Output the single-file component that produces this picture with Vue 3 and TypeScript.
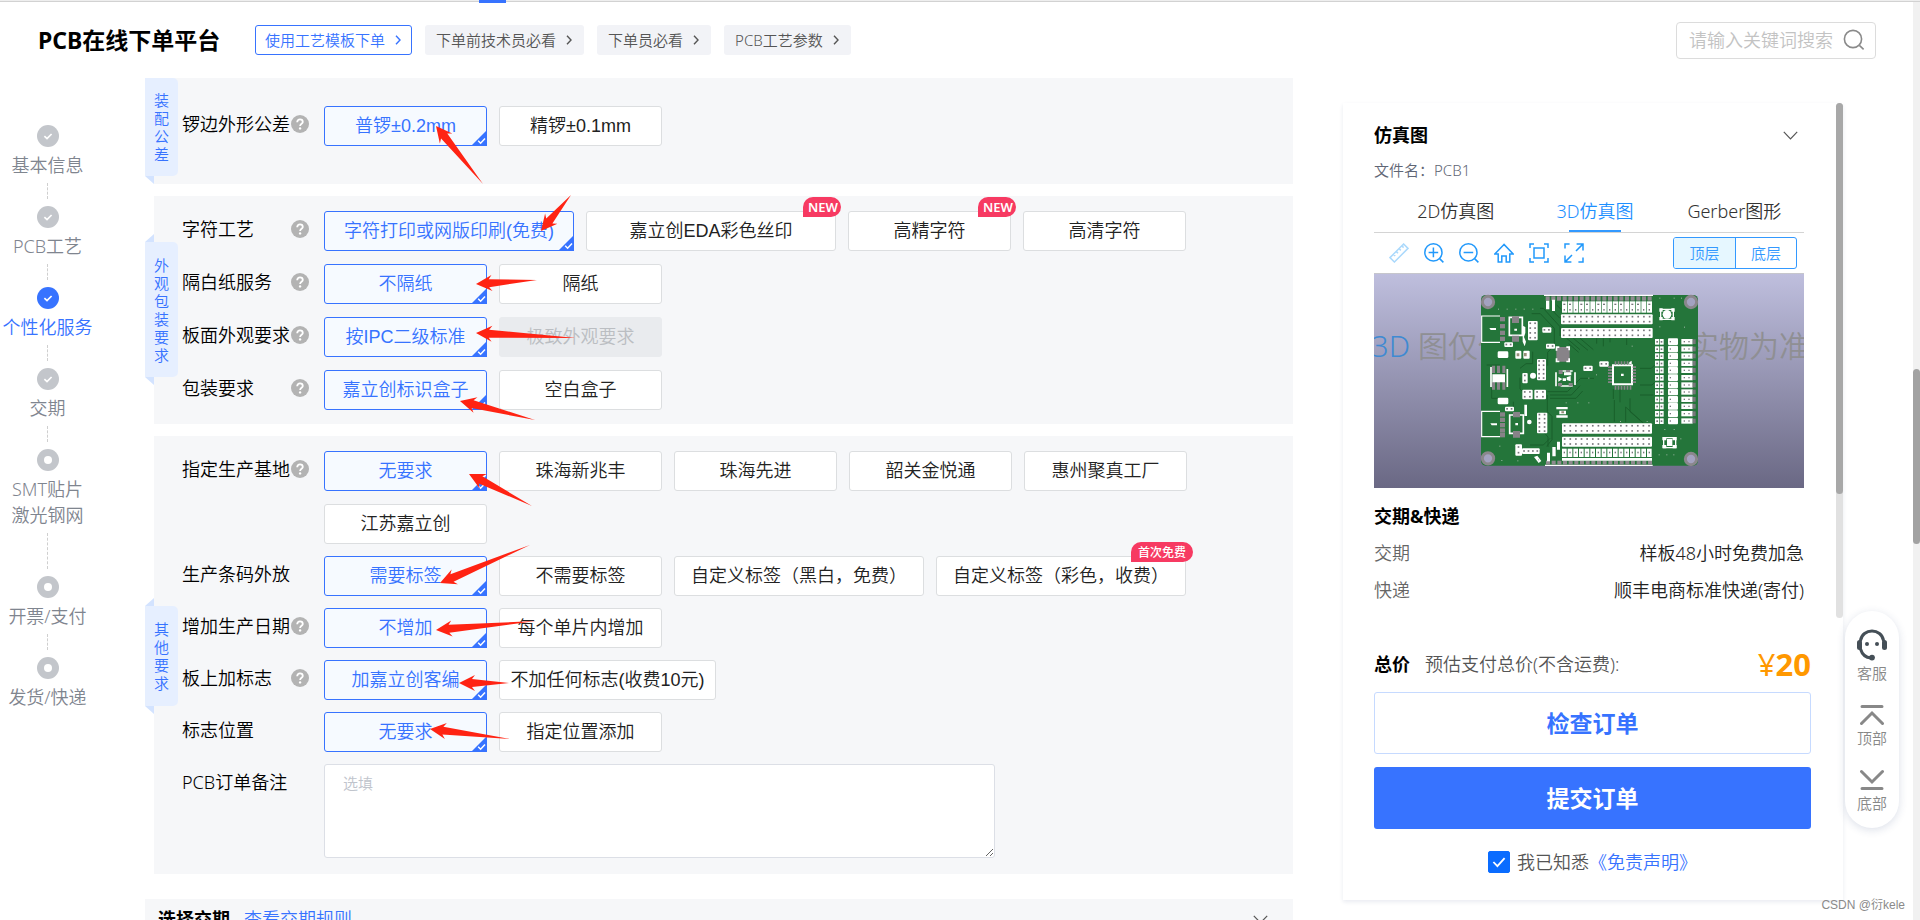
<script setup lang="ts">
import { reactive, ref } from 'vue'

type Size = 'normal' | 'medium' | 'wide'
interface Option { text: string; size?: Size; badge?: string; disabled?: boolean }
interface Row { key: string; label: string; help: boolean; options: Option[] }
interface Section { key: string; tab: string; note?: boolean; rows: Row[] }

const headerLinks = [
  { text: '使用工艺模板下单', primary: true },
  { text: '下单前技术员必看', primary: false },
  { text: '下单员必看', primary: false },
  { text: 'PCB工艺参数', primary: false },
]

const steps = [
  { lines: ['基本信息'], state: 'done' },
  { lines: ['PCB工艺'], state: 'done' },
  { lines: ['个性化服务'], state: 'current' },
  { lines: ['交期'], state: 'done' },
  { lines: ['SMT贴片', '激光钢网'], state: 'todo' },
  { lines: ['开票/支付'], state: 'todo' },
  { lines: ['发货/快递'], state: 'todo' },
]

const sections: Section[] = [
  {
    key: 'assembly', tab: '装配公差', rows: [
      { key: 'edge', label: '锣边外形公差', help: true, options: [{ text: '普锣±0.2mm' }, { text: '精锣±0.1mm' }] },
    ],
  },
  {
    key: 'looks', tab: '外观包装要求', rows: [
      {
        key: 'silk', label: '字符工艺', help: true, options: [
          { text: '字符打印或网版印刷(免费)', size: 'wide' },
          { text: '嘉立创EDA彩色丝印', size: 'wide', badge: 'NEW' },
          { text: '高精字符', badge: 'NEW' },
          { text: '高清字符' },
        ],
      },
      { key: 'paper', label: '隔白纸服务', help: true, options: [{ text: '不隔纸' }, { text: '隔纸' }] },
      { key: 'surface', label: '板面外观要求', help: true, options: [{ text: '按IPC二级标准' }, { text: '极致外观要求', disabled: true }] },
      { key: 'box', label: '包装要求', help: true, options: [{ text: '嘉立创标识盒子' }, { text: '空白盒子' }] },
    ],
  },
  {
    key: 'other', tab: '其他要求', note: true, rows: [
      {
        key: 'base', label: '指定生产基地', help: true, options: [
          { text: '无要求' }, { text: '珠海新兆丰' }, { text: '珠海先进' }, { text: '韶关金悦通' }, { text: '惠州聚真工厂' }, { text: '江苏嘉立创' },
        ],
      },
      {
        key: 'barcode', label: '生产条码外放', help: false, options: [
          { text: '需要标签' }, { text: '不需要标签' },
          { text: '自定义标签（黑白，免费）', size: 'wide' },
          { text: '自定义标签（彩色，收费）', size: 'wide', badge: '首次免费' },
        ],
      },
      { key: 'date', label: '增加生产日期', help: true, options: [{ text: '不增加' }, { text: '每个单片内增加' }] },
      { key: 'mark', label: '板上加标志', help: true, options: [{ text: '加嘉立创客编' }, { text: '不加任何标志(收费10元)', size: 'medium' }] },
      { key: 'place', label: '标志位置', help: false, options: [{ text: '无要求' }, { text: '指定位置添加' }] },
    ],
  },
]

const chosen = reactive<Record<string, string>>({})
for (const s of sections) for (const r of s.rows) chosen[r.key] = r.options[0].text

const note = ref('')
const keyword = ref('')
const agreed = ref(true)
const viewTabs = ['2D仿真图', '3D仿真图', 'Gerber图形']
const activeTab = ref('3D仿真图')
const layer = ref('顶层')

/* Hand-drawn pointers: tip and tail on the form canvas */
const pointers = [
  [436, 126, 483, 184], [541, 231, 571, 195], [476, 284, 537, 280], [476, 333, 576, 338],
  [460, 401, 535, 420], [469, 474, 532, 506], [440, 583, 530, 545], [436, 630, 536, 621],
  [459, 683, 509, 683], [430, 729, 510, 739],
].map(([x, y, tx, ty]) => {
  const length = Math.hypot(tx - x, ty - y)
  const angle = (Math.atan2(ty - y, tx - x) * 180) / Math.PI
  return {
    transform: `translate(${x - 145} ${y - 78}) rotate(${angle})`,
    points: `0,0 16,-8 13,-4 ${length},0 13,4 16,8`,
  }
})

/* Board artwork */
interface Grid { x: number; y: number; w: number; h: number; cols: number; rows: number }
const grids: Grid[] = [
  { x: 303, y: 88, w: 275, h: 30, cols: 16, rows: 2 },
  { x: 303, y: 129, w: 275, h: 30, cols: 16, rows: 2 },
  { x: 306, y: 415, w: 270, h: 31, cols: 16, rows: 2 },
  { x: 306, y: 455, w: 270, h: 30, cols: 16, rows: 2 },
  { x: 204, y: 108, w: 29, h: 58, cols: 2, rows: 4 },
  { x: 231, y: 222, w: 27, h: 64, cols: 2, rows: 5 },
  { x: 187, y: 314, w: 31, h: 29, cols: 2, rows: 2 },
  { x: 223, y: 314, w: 35, h: 29, cols: 2, rows: 2 },
  { x: 231, y: 383, w: 31, h: 62, cols: 2, rows: 5 },
  { x: 187, y: 264, w: 16, h: 31, cols: 1, rows: 2 },
  { x: 166, y: 478, w: 20, h: 34, cols: 1, rows: 2 },
  { x: 186, y: 490, w: 53, h: 17, cols: 4, rows: 1 },
  { x: 247, y: 127, w: 27, h: 16, cols: 2, rows: 1 },
  { x: 258, y: 176, w: 27, h: 15, cols: 2, rows: 1 },
  { x: 370, y: 242, w: 28, h: 16, cols: 2, rows: 1 },
  { x: 418, y: 229, w: 28, h: 16, cols: 2, rows: 1 },
  { x: 133, y: 172, w: 26, h: 14, cols: 2, rows: 1 },
  { x: 135, y: 365, w: 27, h: 14, cols: 2, rows: 1 },
]
const gridDots = grids.flatMap(g =>
  Array.from({ length: g.cols * g.rows }, (_, i) => ({
    x: g.x + ((i % g.cols) + 0.5) * (g.w / g.cols) - 3,
    y: g.y + (Math.floor(i / g.cols) + 0.5) * (g.h / g.rows) - 3,
  })),
)
const columns = Array.from({ length: 16 }, (_, i) => 306 + i * 17)
const edgePads = Array.from({ length: 19 }, (_, i) => 257 + i * 17)
const sideRows = Array.from({ length: 12 }, (_, i) => 162 + Math.round(i * 21.6))
const holes = [[84, 51], [693, 51], [84, 520], [693, 522]]
const vias = [
  [114, 71], [140, 71], [166, 71], [191, 71], [217, 71], [598, 38], [641, 38], [663, 38], [598, 124], [672, 125],
  [352, 352], [317, 352], [385, 352], [124, 525], [172, 526], [234, 523], [613, 432], [641, 432], [661, 460],
  [640, 508], [619, 508], [596, 508], [515, 182], [385, 278], [408, 268], [480, 408], [560, 408], [118, 482],
]
const traces = [
  'M215 86h26l42 44v52l-20 20v40', 'M240 70h10l50 55v28', 'M180 278v34l14 14', 'M180 250l18-14h20v-36', 'M262 320h60l40-40h40',
  'M270 330h64l26-28', 'M270 340h78l20-22', 'M262 330v50l14 14v70l-16 20', 'M250 440l14 16v30', 'M320 160l40 34M340 160l44 36M360 160l40 34M326 176l30 26',
  'M463 345v65M497 412v-46l50 46', 'M510 340v40l40 34', 'M195 345v-20M160 350v16', 'M540 330h40M540 300h36l8-8M540 250h34l10-10', 'M410 160v16M430 160v24M450 160v12M500 160v20',
  'M280 80l20 20M290 60l14 14', 'M460 312v30M480 312v40', 'M120 240h-40M95 310v30h20', 'M210 480h40l20-20',
]
</script>

<template>
  <div class="page">
    <div class="topline"><span class="topline-mark"></span></div>

    <header class="header">
      <h1>PCB在线下单平台</h1>
      <nav class="links">
        <a v-for="l in headerLinks" :key="l.text" href="#" :class="['link-btn', { primary: l.primary }]">
          {{ l.text }}
          <svg width="6" height="10" viewBox="0 0 6 10" fill="none" stroke="currentColor" stroke-width="1.4"><path d="M1 .8 5 5 1 9.2" /></svg>
        </a>
      </nav>
      <form class="search" @submit.prevent>
        <input v-model="keyword" type="text" placeholder="请输入关键词搜索" aria-label="请输入关键词搜索" />
        <button type="submit" aria-label="搜索">
          <svg width="22" height="22" viewBox="0 0 22 22" fill="none" stroke="#8a8a8a" stroke-width="1.6"><circle cx="10" cy="10" r="8.6" /><path d="m16.4 16.4 4.2 4" /></svg>
        </button>
      </form>
    </header>

    <div class="body">
      <nav class="steps">
        <a v-for="(s, i) in steps" :key="i" href="#" :class="['step', s.state]">
          <svg class="step-icon" width="22" height="22" viewBox="0 0 22 22">
            <circle cx="11" cy="11" r="11" fill="currentColor" />
            <circle v-if="s.state === 'todo'" cx="11" cy="11" r="4" fill="#fff" />
            <path v-else d="m7.4 11.2 2.6 2.4 4.6-4.6" fill="none" stroke="#fff" stroke-width="1.7" />
          </svg>
          <span v-for="t in s.lines" :key="t" class="step-text">{{ t }}</span>
          <i v-if="i < steps.length - 1" :class="['dash', { long: s.lines.length > 1 }]"></i>
        </a>
      </nav>

      <main class="form">
        <section v-for="s in sections" :key="s.key" :class="['card', s.key]">
          <div class="tab"><span>{{ s.tab }}</span></div>
          <div v-for="r in s.rows" :key="r.key" class="row" role="radiogroup" :aria-label="r.label">
            <div class="label">
              <span>{{ r.label }}</span>
              <svg v-if="r.help" width="18" height="18" viewBox="0 0 18 18">
                <circle cx="9" cy="9" r="9" fill="#b3b3b3" />
                <path d="M6.2 7.2C6.2 5.4 7.4 4.4 9 4.4s2.8 1 2.8 2.5c0 1.9-2.7 2-2.7 4.1" fill="none" stroke="#fff" stroke-width="1.8" />
                <circle cx="9.1" cy="13.4" r="1.2" fill="#fff" />
              </svg>
            </div>
            <div class="options">
              <label
                v-for="o in r.options" :key="o.text"
                :class="['option', o.size ?? 'normal', { on: chosen[r.key] === o.text, off: o.disabled }]"
              >
                <input v-model="chosen[r.key]" type="radio" :name="r.key" :value="o.text" :disabled="o.disabled" />
                <span>{{ o.text }}</span>
                <svg v-if="chosen[r.key] === o.text" class="corner" width="16" height="16" viewBox="0 0 16 16">
                  <path d="M16 0v16H0z" fill="#3773ff" />
                  <path d="m7.2 10.8 2.4 2.4 4.4-4.8" fill="none" stroke="#fff" stroke-width="1.5" />
                </svg>
                <em v-if="o.badge" :class="['badge', { latin: o.badge === 'NEW' }]">{{ o.badge }}</em>
              </label>
            </div>
          </div>
          <div v-if="s.note" class="row">
            <label class="label" for="note">PCB订单备注</label>
            <textarea id="note" v-model="note" placeholder="选填"></textarea>
          </div>
        </section>

        <section class="delivery">
          <h2>选择交期</h2>
          <a href="#">查看交期规则</a>
          <svg width="15" height="9" viewBox="0 0 15 9" fill="none" stroke="#555" stroke-width="1.2"><path d="m.8.8 6.7 7 6.7-7" /></svg>
        </section>

        <svg class="pointers" width="500" height="700" viewBox="0 0 500 700" aria-hidden="true">
          <polygon v-for="(p, i) in pointers" :key="i" :points="p.points" :transform="p.transform" fill="#ff2313" />
        </svg>
      </main>

      <aside class="panel">
        <div class="panel-top">
          <div class="panel-scroll">
            <div class="panel-head">
              <h2>仿真图</h2>
              <button type="button" aria-label="收起">
                <svg width="15" height="9" viewBox="0 0 15 9" fill="none" stroke="#555" stroke-width="1.2"><path d="m.8.8 6.7 7 6.7-7" /></svg>
              </button>
            </div>
            <p class="file">文件名：PCB1</p>
            <div class="view-tabs" role="tablist">
              <button v-for="t in viewTabs" :key="t" type="button" role="tab" :aria-selected="activeTab === t" @click="activeTab = t">{{ t }}</button>
            </div>
            <div class="tools">
              <button type="button" aria-label="测量" class="dim"><svg width="20" height="20" viewBox="0 0 20 20"><path d="M1 14.6 14.6 1 19 5.4 5.4 19z M4.6 11.4l1.6 1.6M7.4 8.6l1.6 1.6M10.2 5.8l1.6 1.6M13 3l1.6 1.6" /></svg></button>
              <button type="button" aria-label="放大"><svg width="20" height="20" viewBox="0 0 20 20"><circle cx="9.4" cy="9.4" r="8.6" /><path d="M9.4 4.6v9.6M4.6 9.4h9.6M15.6 15.6l3.8 3.8" /></svg></button>
              <button type="button" aria-label="缩小"><svg width="20" height="20" viewBox="0 0 20 20"><circle cx="9.4" cy="9.4" r="8.6" /><path d="M4.6 9.4h9.6M15.6 15.6l3.8 3.8" /></svg></button>
              <button type="button" aria-label="复位"><svg width="20" height="20" viewBox="0 0 20 20"><path d="M10 1.4.8 11h3.4v8h3.6v-6h4.4v6h3.6v-8h3.4z" /></svg></button>
              <button type="button" aria-label="适应"><svg width="20" height="20" viewBox="0 0 20 20"><path d="M1 5V1h4M15 1h4v4M19 15v4h-4M5 19H1v-4M5 5h10v10H5z" /></svg></button>
              <button type="button" aria-label="全屏"><svg width="20" height="20" viewBox="0 0 20 20"><path d="M1 5.6V1h4.6M14.4 19H19v-4.6M12 8l6.6-6.6M12.6 1H19v6.4M8 12l-6.6 6.6M1 12.6V19h6.4" /></svg></button>
              <div class="layers">
                <button v-for="l in ['顶层', '底层']" :key="l" type="button" :aria-pressed="layer === l" @click="layer = l">{{ l }}</button>
              </div>
            </div>
            <svg class="scene" viewBox="0 0 430 215">
              <defs>
                <linearGradient id="sky" x1="0" y1="0" x2="0" y2="1"><stop offset="0" stop-color="#bfbfde" /><stop offset="1" stop-color="#6a6884" /></linearGradient>
              </defs>
              <rect width="430" height="215" fill="url(#sky)" />
              <path d="M0 .5h430" stroke="#c6c6cc" />
              <g font-size="30" fill="#8f8f93">
                <text x="36" y="84" text-anchor="end" fill="#3f8ad2">3D</text>
                <text x="44" y="84">图仅供</text>
                <text x="315" y="84">实物为准</text>
              </g>
              <svg x="86" y="12" width="250" height="190" viewBox="0 0 750 570">
                <rect x="63" y="30" width="651" height="512" rx="14" fill="#24753a" />
                <g fill="none" stroke="#195f2b" stroke-width="3"><path v-for="t in traces" :key="t" :d="t" /></g>
                <path d="M252 31h327M255 541h323" stroke="#fff" stroke-width="4" />
                <g v-for="(h, i) in holes" :key="'h' + i"><circle :cx="h[0]" :cy="h[1]" r="17" fill="#a3a2c0" stroke="#8a878c" stroke-width="9" /></g>
                <g fill="#8f8a8f">
                  <rect v-for="x in edgePads" :key="'t' + x" :x="x" y="34" width="12" height="13" />
                  <rect v-for="x in edgePads" :key="'b' + x" :x="x + 1" y="527" width="12" height="12" />
                </g>
                <g fill="#fff">
                  <rect v-for="x in columns" :key="'c' + x" :x="x" y="49" width="15" height="34" />
                  <rect v-for="x in columns" :key="'d' + x" :x="x" y="491" width="14" height="25" />
                  <path d="M306 519h270v8H306zM258 47h10v26h-10zM276 44h9v34h-9zM261 503h9v26h-9zM277 486h10v28h-10zM291 470h9v24h-9zM222 516l10-4 12 16-8 6zM193 359h8v34h-8zM188 122l8 4v18l-4 12 6 14-4 14-6-14z" />
                  <rect v-for="(g, i) in grids" :key="'g' + i" :x="g.x" :y="g.y" :width="g.w" :height="g.h" rx="3" />
                  <g v-for="y in sideRows" :key="'s' + y">
                    <rect x="585" :y="y" width="12" height="17" /><rect x="599" :y="y" width="12" height="17" />
                    <rect x="624" :y="y - 2" width="30" height="20" rx="3" /><rect x="664" :y="y" width="34" height="16" />
                  </g>
                </g>
                <g fill="#77777b">
                  <rect v-for="(d, i) in gridDots" :key="'p' + i" :x="d.x" :y="d.y" width="5" height="5" />
                  <template v-for="y in sideRows" :key="'q' + y">
                    <rect x="589" :y="y + 6" width="5" height="5" /><rect x="602" :y="y + 6" width="5" height="5" />
                    <rect x="629" :y="y + 6" width="4" height="4" /><rect x="671" :y="y + 6" width="4" height="4" /><rect x="685" :y="y + 6" width="4" height="4" />
                    <rect x="698" :y="y + 1" width="9" height="14" />
                  </template>
                  <template v-for="x in columns" :key="'r' + x"><rect :x="x + 5" y="72" width="4" height="5" /><rect :x="x + 5" y="500" width="4" height="5" /></template>
                  <template v-for="x in columns.filter((_, i) => i % 3 !== 2)" :key="'u' + x"><rect :x="x + 4" y="56" width="6" height="4" /></template>
                </g>
                <g fill="#9fb8a4"><rect v-for="(v, i) in vias" :key="'v' + i" :x="v[0]" :y="v[1]" width="3" height="3" /></g>
                <!-- connectors -->
                <g fill="none" stroke="#fff" stroke-width="3.5">
                  <path d="M120 93H65v79h55M120 379H65v76h55" />
                  <path d="M148 97h39v54h-39zM149 390h41v55h-41z" stroke-width="5" />
                  <path d="M93 246v60M142 252v54M288 262v42M345 262v38M302 258h36M302 303h36" stroke-width="5" />
                  <path d="M459 241h57v57h-57z" stroke-width="6" />
                  <path d="M602 73h38v30h-38zM611 458h36v30h-36z" stroke-width="4" />
                </g>
                <g fill="#878388">
                  <path d="M156 94h21v20h-21zM156 152h21v18h-21zM159 381h21v16h-21zM159 438h21v20h-21z" />
                  <path v-for="y in [96, 117, 137, 155, 382, 398, 414, 430, 444]" :key="y" :d="`M120 ${y}h15v13h-15z`" />
                  <path d="M96 242h9v22h-9zM111 242h9v22h-9zM127 242h9v22h-9zM96 290h9v24h-9zM111 290h9v24h-9zM127 290h9v24h-9z" />
                  <path v-for="k in [0, 1, 2, 3, 4, 5]" :key="'ic' + k" :d="`M${464 + k * 9} 229h5v10h-5zM${464 + k * 9} 302h5v12h-5zM444 ${244 + k * 9}h12v5h-12zM518 ${244 + k * 9}h10v5h-10z`" />
                  <path d="M289 186h40v44h-40zM296 255h12v12h-12zM318 255h12v12h-12zM294 294h12v10h-12zM326 294h12v10h-12z" />
                </g>
                <g fill="#fff">
                  <path d="M97 268h38v24H97zM312 262h22v9h-22zM295 276l12 6-12 8zM320 277l12-4v16l-12-4zM289 366h34v7h-34zM289 391h34v7h-34zM298 377h20v11h-20zM308 280h10v8h-10z" />
                  <path d="M88 129h20v6H92zM91 415h20v6H95zM163 131h8v6h-8zM166 414h8v7h-8zM483 266h8v7h-8zM505 235l10-8v12z" />
                  <rect x="113" y="199" width="32" height="20" rx="4" /><rect x="113" y="338" width="32" height="20" rx="4" />
                  <rect x="166" y="197" width="18" height="24" rx="3" /><rect x="190" y="197" width="19" height="24" rx="3" />
                  <circle cx="208" cy="411" r="7" /><circle cx="219" cy="272" r="9" />
                  <circle cx="621" cy="88" r="13" /><path d="M598 70h10v10h-10zM634 70h10v10h-10zM598 96h10v10h-10zM634 96h10v10h-10zM607 456h12v10h-12zM638 456h12v10h-12zM607 480h12v10h-12zM638 480h12v10h-12zM621 462h16v21h-16z" />
                  <path d="M287 184h11v5h-6v8h-5zM330 184v12h-5v-7h-6v-5zM287 232v-12h5v7h6v5zM330 232h-11v-5h6v-7h5z" />
                </g>
                <path d="M170 205h8v9h-8zM192 204h8v10h-8zM304 379h8v6h-8z" fill="#98907a" />
              </svg>
            </svg>
            <h2 class="sub">交期&amp;快递</h2>
            <dl>
              <div><dt>交期</dt><dd>样板48小时免费加急</dd></div>
              <div><dt>快递</dt><dd>顺丰电商标准快递(寄付)</dd></div>
            </dl>
          </div>
          <div class="panel-track"><i></i></div>
        </div>
        <div class="pay">
          <div class="total"><strong>总价</strong><span>预估支付总价(不含运费):</span><b><i>¥</i>20</b></div>
          <button type="button" class="check">检查订单</button>
          <button type="button" class="submit">提交订单</button>
          <div class="agree">
            <span class="box">
              <input id="agree" v-model="agreed" type="checkbox" />
              <svg v-if="agreed" width="22" height="22" viewBox="0 0 22 22"><path d="m5.4 11 4 4.2 7.2-8" fill="none" stroke="#fff" stroke-width="1.8" /></svg>
            </span>
            <label for="agree">我已知悉</label><a href="#">《免责声明》</a>
          </div>
        </div>
      </aside>
    </div>

    <nav class="float">
      <a href="#" class="service">
        <svg width="32" height="32" viewBox="0 0 32 32">
          <path d="M4.500 11.500C5.500 5.500 10.500 2 16 2s10.500 3.500 11.500 9.500M4.500 20C6 25 9.500 28.600 15 29" fill="none" stroke="#454f57" stroke-width="2.600" />
          <rect x="1" y="11" width="5" height="10" rx="2.500" fill="#454f57" /><rect x="26" y="11" width="5" height="10" rx="2.500" fill="#454f57" />
          <circle cx="11" cy="15" r="2" fill="#454f57" /><circle cx="21" cy="15" r="2" fill="#454f57" /><circle cx="16" cy="28.600" r="2.900" fill="#454f57" />
        </svg>客服
      </a>
      <a href="#"><svg width="24" height="22" viewBox="0 0 24 22"><path d="M2 2.500h20M1.500 19.500 12 9l10.500 10.500" /></svg>顶部</a>
      <a href="#"><svg width="24" height="22" viewBox="0 0 24 22"><path d="M2 19.500h20M1.500 2.500 12 13 22.500 2.500" /></svg>底部</a>
    </nav>
    <div class="page-track"><i></i></div>
    <span class="credit">CSDN @衍kele</span>
  </div>
</template>

<style>
body { margin: 0; background: #fff; }
</style>

<style scoped>
.page {
  position: relative;
  display: flex;
  flex-direction: column;
  height: 100vh;
  overflow: hidden;
  background: #fff;
  color: #000;
  font: 350 18px/26px "Noto Sans", "Noto Sans CJK SC", sans-serif;
}
.page *, .page { box-sizing: border-box; }
a { text-decoration: none; color: #3773ff; }
button { margin: 0; padding: 0; border: 0; background: none; font: inherit; color: inherit; cursor: pointer; }
h1, h2, p, dl, dd { margin: 0; }
h2 { font-size: 18px; line-height: 26px; }
svg { display: block; flex: none; }

.topline { position: relative; flex: none; height: 2px; background: #eee; border-bottom: 1px solid #d2d2d2; }
.topline-mark { position: absolute; left: 479px; top: 0; width: 27px; height: 3px; background: #3773ff; }

.header { flex: none; display: flex; align-items: center; height: 76px; padding: 0 44px 0 38px; }
h1 { width: 217px; font-size: 23px; line-height: 30px; white-space: nowrap; }
.links { display: flex; gap: 13px; }
.link-btn {
  display: flex; align-items: center; gap: 10px; height: 30px; padding: 0 12px 0 11px;
  border-radius: 3px; background: #f2f3f7; color: #555; font-size: 15px; white-space: nowrap;
}
.link-btn.primary { padding: 0 10px 0 9px; border: 1px solid #3773ff; background: #fff; color: #3773ff; }
.search { display: flex; align-items: center; width: 200px; height: 37px; margin-left: auto; padding: 0 10px 0 12px; border: 1px solid #dcdcdc; border-radius: 4px; }
.search input { flex: 1; min-width: 0; padding: 0; border: 0; outline: 0; font: inherit; }
.search input::placeholder { color: #c3c3c3; }

.body { flex: 1; min-height: 0; display: grid; grid-template-columns: 95px minmax(0, 1fr) 500px; gap: 50px; align-items: start; padding-right: 77px; }

.steps { display: flex; flex-direction: column; padding-top: 47px; }
.step { display: flex; flex-direction: column; align-items: center; color: #7f858f; white-space: nowrap; }
.step-icon { margin-bottom: 5px; color: #c3c6cb; }
.step.current, .step.current .step-icon { color: #3773ff; }
.dash { height: 16px; margin: 5px 0 7px; border-left: 1px dashed #cfcfcf; }
.dash.long { height: 36px; }

.form { position: relative; display: flex; flex-direction: column; gap: 12px; }
.card { position: relative; display: flex; flex-direction: column; gap: 12px; margin-left: 9px; padding: 15px 28px 16px; background: #f6f7f9; }
.card.assembly { padding: 28px 28px 38px; }
.card.looks { gap: 13px; padding: 15px 28px 14px; }
.tab {
  position: absolute; left: -9px; top: 164px; width: 33px; height: 110px; display: flex; align-items: center; justify-content: center;
  border-radius: 0 5px 5px 0; background: #e6efff; color: #3773ff; font-size: 15px; line-height: 18px;
}
.tab span { width: 15px; }
.tab::before, .tab::after { content: ""; position: absolute; left: 0; width: 9px; height: 8px; background: #d3e3ff; }
.tab::before { top: -8px; clip-path: polygon(100% 0, 100% 100%, 0 100%); }
.tab::after { bottom: -8px; clip-path: polygon(0 0, 100% 0, 100% 100%); }
.assembly .tab { top: 0; height: 98px; }
.assembly .tab::before { display: none; }
.looks .tab { top: 46px; height: 135px; }
.other .tab { top: 170px; height: 100px; }

.row { display: flex; align-items: flex-start; }
.label { flex: none; display: flex; align-items: center; justify-content: space-between; width: 127px; height: 36px; margin-right: 15px; white-space: nowrap; }
.options { display: flex; flex-wrap: wrap; gap: 13px 12px; max-width: 870px; }
.option {
  position: relative; display: flex; align-items: center; justify-content: center; width: 163px; height: 40px;
  border: 1px solid #dcdee0; border-radius: 3px; background: #fff; color: #222;
  font-family: "Liberation Sans", "Noto Sans CJK SC", sans-serif; white-space: nowrap; cursor: pointer;
}
.option.wide { width: 250px; }
.option.medium { width: 217px; }
.option input { position: absolute; inset: 0; margin: 0; opacity: 0; }
.option.on { border-color: #3773ff; background: #f6faff; color: #3773ff; }
.option.off { border-color: #e9ebee; background: #e9ebee; color: #bbbec2; }
.corner { position: absolute; right: -1px; bottom: -1px; }
.badge {
  position: absolute; top: -15px; right: -8px; height: 20px; padding: 0 7px; border-radius: 10px 10px 10px 0;
  background: #f73a62; color: #fff; font: 500 12px/20px "Noto Sans CJK SC", sans-serif;
}
.badge.latin { right: -6px; padding: 0 3px 0 5px; font: 600 13px/20px "Noto Sans", sans-serif; }
textarea {
  flex: 1; max-width: 671px; height: 94px; padding: 5px 18px; border: 1px solid #dcdfe6; border-radius: 3px;
  background: #fff; font: 350 15px/26px "Noto Sans", "Noto Sans CJK SC", sans-serif; outline: 0;
}
textarea::placeholder { color: #c0c4cc; }

.delivery { display: flex; align-items: center; gap: 14px; height: 60px; margin-top: 13px; padding: 7px 25px 27px 13px; background: #f6f7f9; }
.delivery svg { margin-left: auto; }
.pointers { position: absolute; left: 0; top: 0; pointer-events: none; }

.panel { margin-top: 25px; background: #fff; box-shadow: 0 2px 4px rgba(40, 60, 120, .1); }
.panel-top { display: flex; }
.panel-scroll { flex: 1; min-width: 0; padding: 19px 32px 15px 31px; }
.panel-head { display: flex; justify-content: space-between; align-items: center; padding-right: 6px; }
.file { margin-top: 12px; color: #5f6675; font-size: 15px; line-height: 20px; }
.view-tabs { display: grid; grid-template-columns: repeat(3, 1fr); margin-top: 12px; padding-left: 12px; border-bottom: 1px solid #d4d4d4; }
.view-tabs button { position: relative; height: 40px; padding-bottom: 2px; color: #333; }
.view-tabs button[aria-selected="true"] { color: #1e90ff; }
.view-tabs button[aria-selected="true"]::after { content: ""; position: absolute; left: 50%; bottom: 0; width: 52px; height: 2px; margin-left: -26px; background: #3399ff; }
.tools { display: flex; align-items: center; gap: 15px; height: 40px; padding: 0 7px 0 15px; }
.tools svg { fill: none; stroke: #2299fb; stroke-width: 1.5; }
.tools .dim svg { stroke: #abd9fc; }
.layers { display: flex; margin-left: auto; border: 1px solid #3399ff; border-radius: 3px; overflow: hidden; }
.layers button { width: 61px; height: 30px; color: #3399ff; font-size: 15px; }
.layers button + button { border-left: 1px solid #3399ff; }
.layers button[aria-pressed="true"] { background: #e6f7ff; }
.scene { width: 100%; }
.sub { margin-top: 15px; }
dl div { display: flex; justify-content: space-between; margin-top: 11px; }
dt { color: #666; }
dd { color: #222; }
.panel-track { width: 7px; border-radius: 4px; background: #e1e1e1; }
.panel-track i { display: block; height: 76%; border-radius: 4px; background: #a8a8a8; }

.pay { display: flex; flex-direction: column; padding: 24px 32px 25px 31px; }
.total { display: flex; align-items: center; gap: 15px; height: 44px; color: #555; }
.total strong { color: #000; font-weight: 700; }
.total b { margin-left: auto; color: #ff9800; font-size: 31px; font-weight: 700; line-height: 44px; }
.total i { font-style: normal; font-weight: 400; }
.check, .submit { height: 62px; border-radius: 3px; font-size: 23px; line-height: 30px; font-weight: 700; }
.check { margin-top: 6px; border: 1px solid #c6daff; color: #3773ff; }
.submit { margin-top: 13px; background: #3773ff; color: #fff; }
.agree { display: flex; justify-content: center; align-items: center; margin-top: 20px; color: #555; }
.box { position: relative; width: 22px; height: 22px; margin-right: 7px; }
.box input { appearance: none; display: block; width: 22px; height: 22px; margin: 0; border: 1px solid #0a6cff; border-radius: 2px; }
.box input:checked { background: #0a6cff; }
.box svg { position: absolute; inset: 0; pointer-events: none; }

.float {
  position: absolute; right: 21px; top: 611px; width: 54px; display: flex; flex-direction: column; align-items: center; gap: 22px;
  padding: 18px 0 16px; border-radius: 27px; background: #fff; box-shadow: 0 2px 8px rgba(40, 60, 120, .16);
}
.float a { display: flex; flex-direction: column; align-items: center; gap: 3px; color: #888; font-size: 15px; line-height: 18px; }
.float path { fill: none; stroke: #888; stroke-width: 3; stroke-linecap: round; }
.float .service path { stroke: #454f57; }
.page-track { position: absolute; right: 0; top: 2px; bottom: 0; width: 7px; background: #f1f1f1; }
.page-track i { position: absolute; top: 40%; width: 7px; height: 19%; background: #a2a2a2; border-radius: 4px; }
.credit { position: absolute; right: 15px; bottom: 6px; color: #8a8a8a; font: 12px/18px "Liberation Sans", "Noto Sans CJK SC", sans-serif; }
</style>
